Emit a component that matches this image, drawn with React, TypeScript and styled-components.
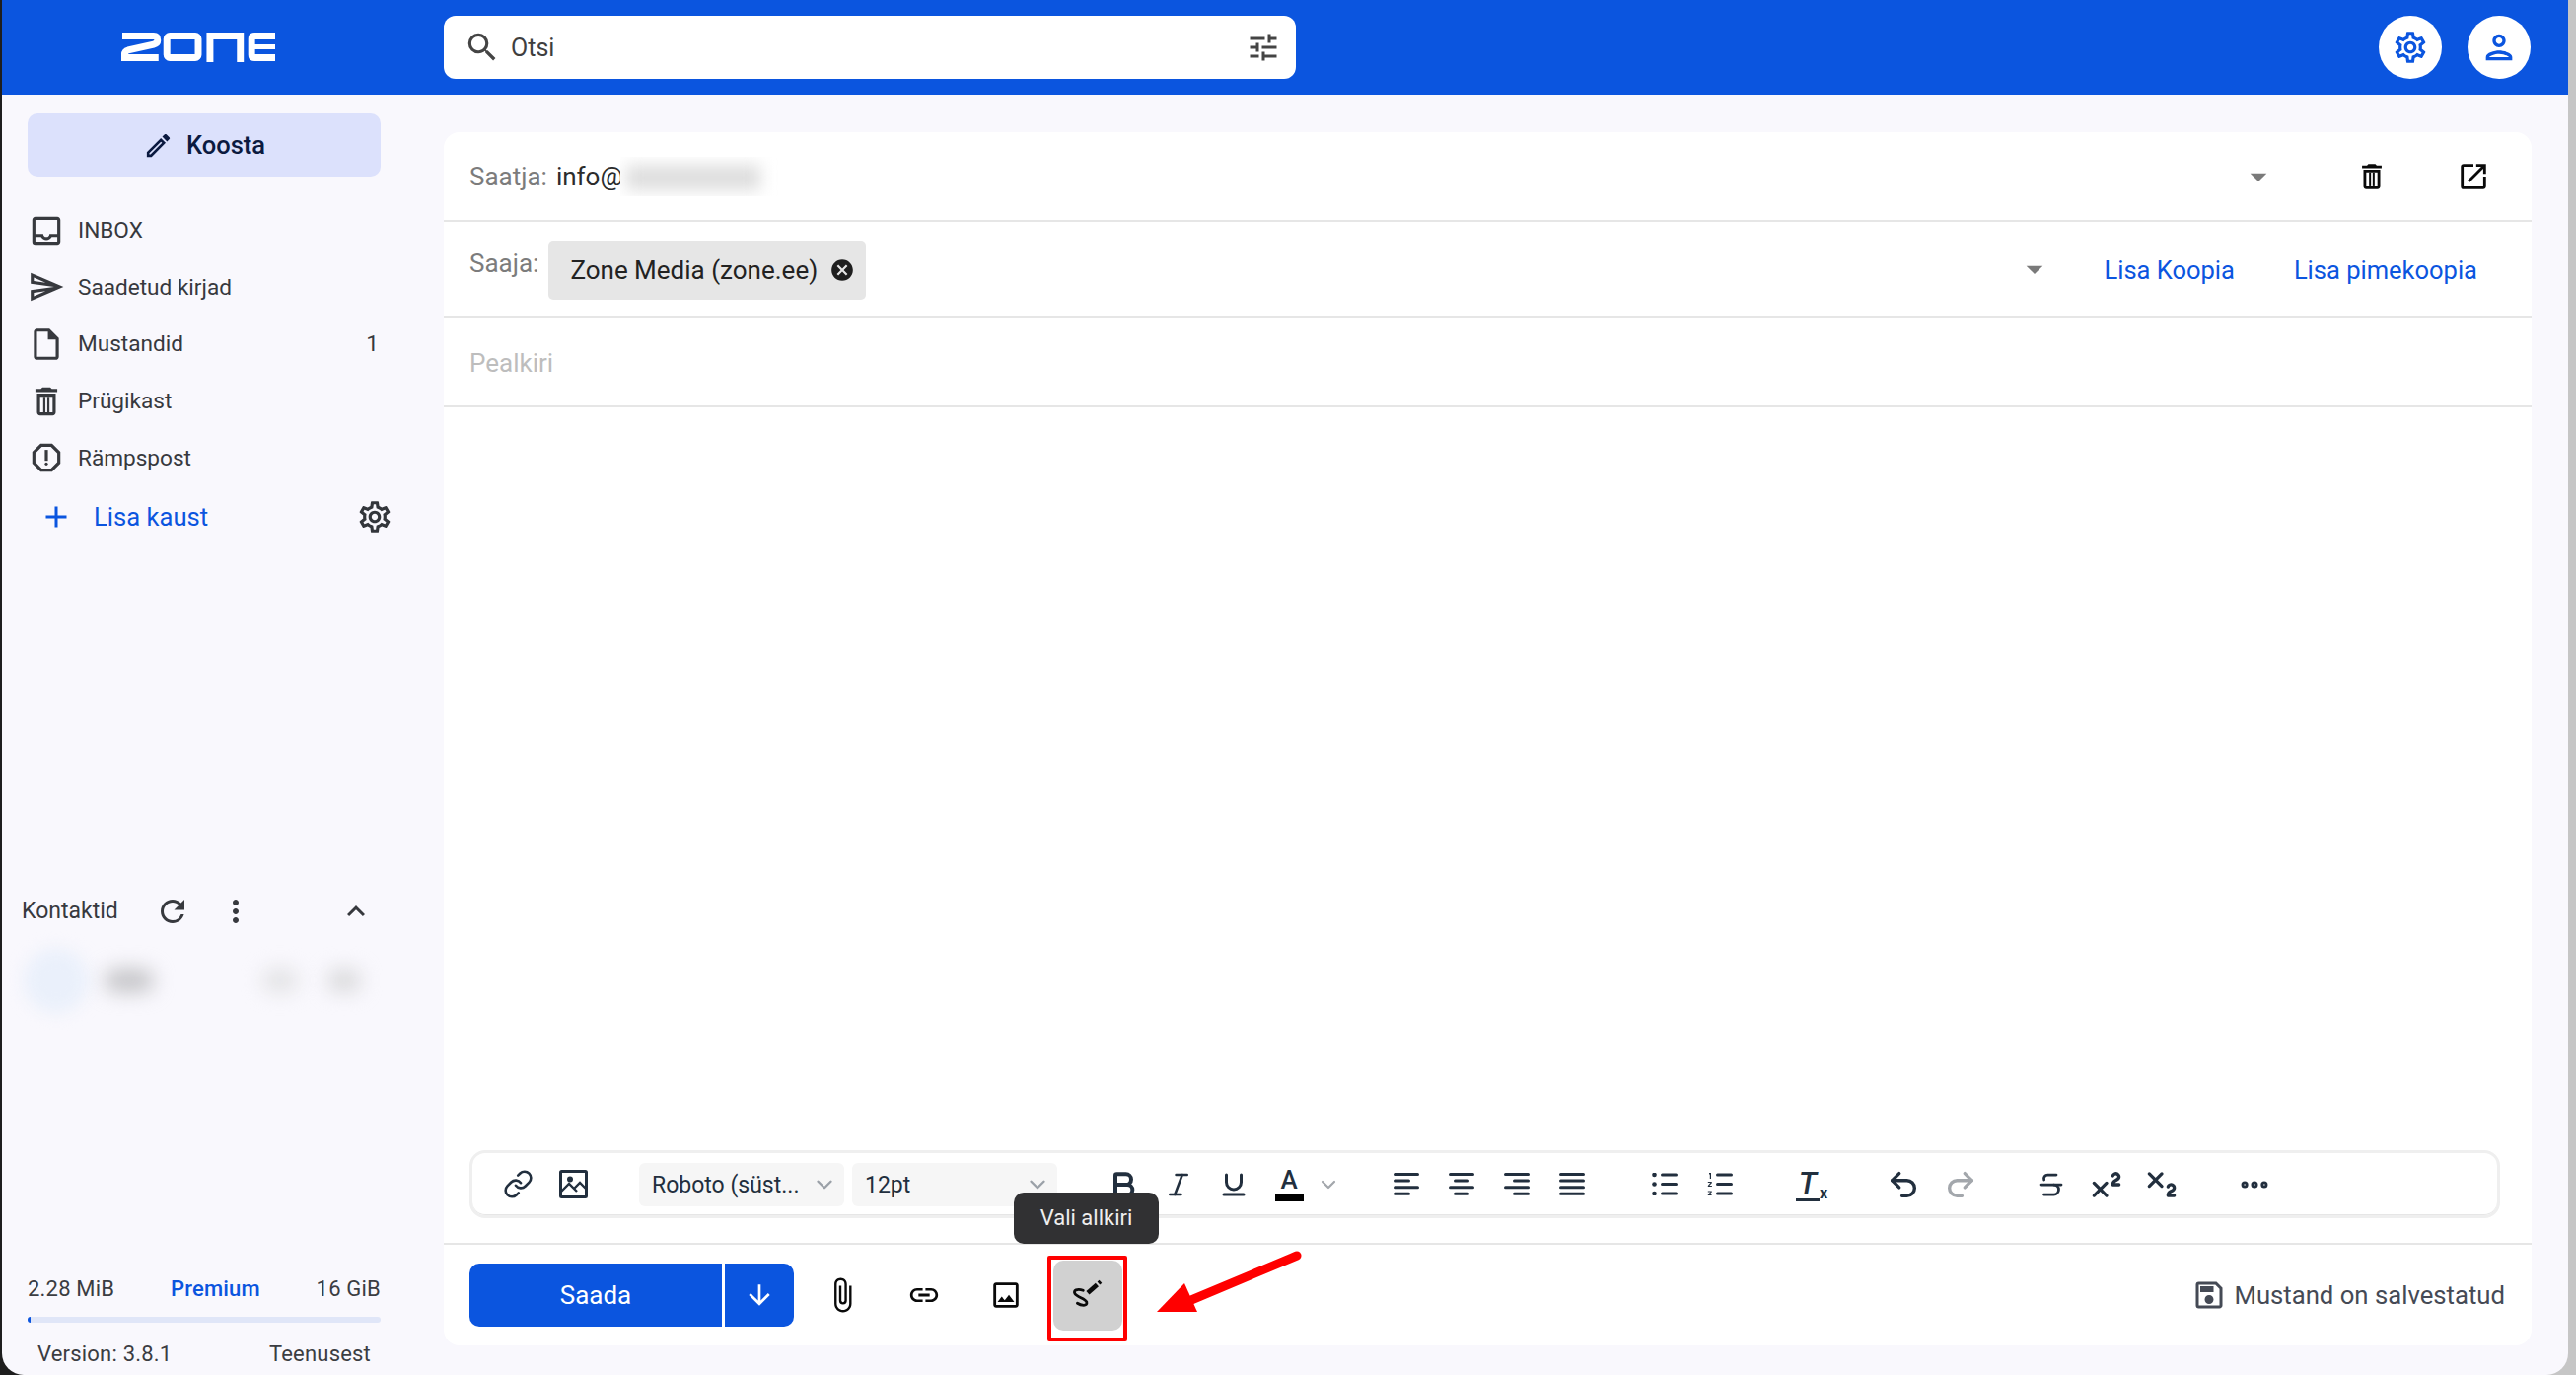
import React from "react";
import styled, { createGlobalStyle } from "styled-components";
import {
  MdSearch, MdTune, MdOutlineSettings, MdOutlinePerson, MdOutlineEdit, MdOutlineInbox, MdOutlineSend,
  MdOutlineInsertDriveFile, MdOutlineReport, MdAdd, MdRefresh, MdMoreVert,
  MdKeyboardArrowUp, MdArrowDropDown, MdOpenInNew, MdCancel, MdArrowDownward, MdAttachFile, MdLink,
  MdOutlineImage, MdOutlineSave,
} from "react-icons/md";
import { Bold, Italic, Underline, Strikethrough, Superscript, Subscript, Undo2, Redo2, Link as LinkIcon, Ellipsis, ChevronDown } from "lucide-react";

const Global = createGlobalStyle`
  html, body { margin: 0; padding: 0; height: 100%; overflow: hidden; }
  body { background: linear-gradient(to right, #1e1e1e 50%, #c6c6c6 50%); font-family: Roboto, "Noto Sans", sans-serif; }
`;

const BLUE = "#0b55df";
const INK = "#222f3e";

const Win = styled.div`
  position: relative; width: 2602px; height: 1394px; margin-left: 2px; background: #f9f8fd;
  border-radius: 0 0 22px 22px; overflow: hidden; display: grid; grid-template-rows: 96px 1fr;
`;
const Header = styled.header`
  background: ${BLUE}; display: flex; align-items: center; padding-left: 121px; padding-right: 38px;
`;
const Logo = styled.svg`width: 156px; height: 30px; flex: none;`;
const Search = styled.div`
  margin-left: 171px; width: 864px; height: 64px; background: #fff; border-radius: 12px; display: flex;
  align-items: center; padding: 0 15px 0 20px; box-sizing: border-box; color: #444; font-size: 25px;
  span { margin-left: 10px; flex: 1; color: #3f3f3f; }
`;
const RoundBtn = styled.div<{ $ml: number }>`
  width: 64px; height: 64px; border-radius: 50%; background: #fff; color: ${BLUE}; display: flex;
  align-items: center; justify-content: center; margin-left: ${p => p.$ml}px; flex: none;
`;
const Main = styled.div`display: grid; grid-template-columns: 448px minmax(0, 1fr); min-height: 0;`;
const Side = styled.aside`display: flex; flex-direction: column; min-height: 0;`;
const Compose = styled.div`
  margin: 19px 0 0 26px; width: 358px; height: 64px; border-radius: 10px; background: #dce1fc; color: #0b1a40;
  display: flex; align-items: center; justify-content: center; gap: 13px; font-size: 25.5px; font-weight: 500;
  box-sizing: border-box;
`;
const Nav = styled.nav`margin: 26px 0 0 26px; width: 358px;`;
const NavRow = styled.div`
  height: 57.6px; display: flex; align-items: center; gap: 13px; color: #37393e; font-size: 22.6px; font-weight: 400;
  svg { flex: none; }
  b { margin-left: auto; font-weight: 400; padding-right: 2px; }
`;
const AddRow = styled.div`
  height: 62px; display: flex; align-items: center; color: ${BLUE}; font-size: 25.6px;
  padding-left: 11px;
  span { margin-left: 20px; flex: 1; }
  svg:last-child { color: #33363b; margin-right: -13px; }
`;
const ContactHead = styled.div`
  margin-top: 351px; height: 36px; padding: 0 71px 0 20px; display: flex; align-items: center; color: #37393e;
  font-size: 23px; font-weight: 400;
`;
const ContactTitle = styled.span`width: 96px;`;
const HeadIcon = styled.span<{ $ml: string }>`display: flex; margin-left: ${p => p.$ml};`;
const ContactBlur = styled.div`
  margin-top: 17px; height: 70px; padding-left: 22px; display: flex; align-items: center; position: relative;
`;
const BlurAvatar = styled.div`width: 66px; height: 66px; border-radius: 50%; background: #eaf0fb; filter: blur(8px); flex: none;`;
const BlurBit = styled.div<{ $w: number; $ml: number; $c: string }>`
  width: ${p => p.$w}px; height: 24px; border-radius: 12px; background: ${p => p.$c}; filter: blur(10px);
  margin-left: ${p => p.$ml}px; flex: none;
`;
const Quota = styled.div`margin-top: auto; padding: 0 0 8px 26px; width: 358px;`;
const QuotaRow = styled.div`
  height: 28px; display: flex; justify-content: space-between; align-items: center; font-size: 22px; color: #3b3d42;
  letter-spacing: .2px;
`;
const Premium = styled.span`color: ${BLUE}; font-weight: 500;`;
const Bar = styled.div`height: 6px; margin: 15px 0 17px; background: #e0e6f8; border-radius: 3px; overflow: hidden;`;
const BarFill = styled.div`height: 100%; background: ${BLUE};`;
const VersionRow = styled(QuotaRow)`padding: 0 10px; color: #3b3d42;`;

const Content = styled.div`padding: 38px 37px 30px 0; min-height: 0; display: flex;`;
const Card = styled.section`
  flex: 1; min-width: 0; background: #fff; border-radius: 16px; display: flex; flex-direction: column;
`;
const Row = styled.div<{ $h: number }>`
  height: ${p => p.$h}px; flex: none; box-sizing: border-box; border-bottom: 2px solid #e6e6e6; display: flex;
  align-items: center; padding-left: 26px; font-size: 26px; color: #2c2c2c;
`;
const Label = styled.span`color: #7c7c7c; font-size: 26px;`;
const Mail = styled.span`margin-left: 9px;`;
const Blurred = styled.span`
  position: relative; display: block; width: 160px; height: 40px; overflow: hidden; margin-left: -3px; background: #fff;
  &::after { content: ""; position: absolute; left: 6px; right: 18px; top: 8px; bottom: 6px; background: #dedede; filter: blur(8px); }
`;
const Caret = styled.span<{ $ml: string }>`
  display: flex; width: 40px; justify-content: center; color: #7a7a7a; margin-left: ${p => p.$ml};
`;
const IconBtn = styled.span<{ $ml: number }>`
  display: flex; width: 48px; justify-content: center; color: #0a0a0a; margin-left: ${p => p.$ml}px;
`;
const RowEnd = styled.span`width: 35px; flex: none;`;
const ToRow = styled(Row)`align-items: flex-start; padding-top: 19px; padding-right: 55px;`;
const ToLabel = styled(Label)`margin-top: 8px;`;
const Chip = styled.span`
  margin-left: 10px; height: 60px; width: 322px; box-sizing: border-box; background: #e6e6e6; border-radius: 5px;
  display: flex; align-items: center; padding-left: 22px; color: #222; gap: 12px;
  svg { color: #1f1f1f; }
`;
const CaretTop = styled(Caret)`margin-top: 9px;`;
const LinkText = styled.span<{ $ml: number }>`
  color: ${BLUE}; margin-left: ${p => p.$ml}px; height: 60px; display: flex; align-items: center; font-size: 25.5px;
`;
const Subject = styled(Row)`color: #bdbdbd; padding-top: 2px; font-size: 26px;`;
const Editor = styled.div`flex: 1; display: flex; flex-direction: column; justify-content: flex-end; padding: 0 32px 25px 26px; min-height: 0;`;
const Toolbar = styled.div`
  height: 69px; box-sizing: border-box; border: 3px solid #efefef; border-radius: 16px; padding-left: 18px;
  display: flex; align-items: center; box-shadow: inset 0 -1px #e6e6e6;
`;
const Group = styled.div<{ $ml: number }>`display: flex; align-items: center; margin-left: ${p => p.$ml}px; color: ${INK};`;
const TBtn = styled.span<{ $w?: number; $muted?: boolean }>`
  width: ${p => p.$w ?? 56}px; height: 44px; display: flex; align-items: center; justify-content: center;
  color: ${p => (p.$muted ? "#a3a7ac" : "inherit")}; flex: none;
`;
const Select = styled.div<{ $ml: number }>`
  width: 208px; height: 44px; margin-left: ${p => p.$ml}px; background: #f6f6f6; border-radius: 6px; display: flex;
  align-items: center; justify-content: space-between; padding: 2px 7px 0 13px; box-sizing: border-box; color: ${INK};
  font-size: 23px; flex: none;
  svg { color: #9ba1a8; margin-top: -2px; }
`;
const ColorA = styled.span`
  width: 29px; height: 35px; border-bottom: 7px solid #000; box-sizing: border-box; text-align: center; font-size: 26px;
  font-weight: 500; line-height: 27px; color: ${INK};
`;
const ClearT = styled.span`
  position: relative; font: italic 500 31px/31px Roboto, sans-serif; width: 24px; text-align: center;
  border-bottom: 3px solid ${INK}; height: 31px; color: ${INK}; margin-right: 8px;
`;
const ClearX = styled.span`
  position: absolute; left: 24px; bottom: -4px; font: 700 16px Roboto, sans-serif; color: ${INK};
`;
const Footer = styled.div`
  height: 104px; flex: none; box-sizing: border-box; border-top: 2px solid #e6e6e6; display: flex; align-items: center;
  padding: 0 27px 0 26px; font-size: 25.7px; color: #454a55;
`;
const Send = styled.div`
  width: 329px; height: 64px; border-radius: 10px; background: ${BLUE}; display: grid; grid-template-columns: 256px 3px 1fr;
  color: #fff; flex: none; margin-right: 14px; font-size: 26px;
`;
const SendLabel = styled.span`display: flex; align-items: center; justify-content: center;`;
const SendDivider = styled.span`background: #fff;`;
const SendArrow = styled.span`display: flex; align-items: center; justify-content: center;`;
const FootBtn = styled.div<{ $active?: boolean }>`
  position: relative; width: 70px; height: 71px; margin-right: 13px; border-radius: 10px; display: flex; align-items: center;
  justify-content: center; color: #0a0a0a; background: ${p => (p.$active ? "#d1d1d1" : "transparent")}; flex: none;
`;
const RedBox = styled.span`
  position: absolute; top: -5px; left: -6px; right: -5px; bottom: -11px; border: 4px solid #f00; border-radius: 2px;
`;
const Tooltip = styled.span`
  position: absolute; left: -40px; bottom: 88px; width: 147px; height: 52px; border-radius: 10px; background: #313133;
  color: #eee; font-size: 22px; display: flex; align-items: center; justify-content: center;
`;
const Saved = styled.div`margin-left: auto; display: flex; align-items: center; gap: 7px;`;
const Arrow = styled.svg`position: absolute; left: 1163px; top: 1265px; width: 160px; height: 70px;`;

const bars = {
  left: [[0, 26], [0, 17], [0, 26], [0, 17]],
  center: [[0, 26], [5, 16], [0, 26], [5, 16]],
  right: [[0, 26], [9, 17], [0, 26], [9, 17]],
  justify: [[0, 26], [0, 26], [0, 26], [0, 26]],
};
const Align = ({ kind }: { kind: keyof typeof bars }) => (
  <svg width="26" height="23" viewBox="0 0 26 23">
    {bars[kind].map(([x, w], i) => <rect key={i} x={x} y={i * 6.6} width={w} height="3" rx="1.5" fill={INK} />)}
  </svg>
);
const BulletList = () => (
  <svg width="26" height="23" viewBox="0 0 26 23" fill={INK}>
    {[0, 1, 2].map(i => <React.Fragment key={i}><circle cx="2.5" cy={2 + i * 9.5} r="2.3" /><rect x="9" y={0.5 + i * 9.5} width="17" height="3" rx="1.5" /></React.Fragment>)}
  </svg>
);
const NumList = () => (
  <svg width="26" height="23" viewBox="0 0 26 23" fill={INK}>
    {[0, 1, 2].map(i => <rect key={i} x="9" y={0.5 + i * 9.5} width="17" height="3" rx="1.5" />)}
    <path d="M2 0h2v6H2.800V1.400H2zM.8 9h4v1.200L2.300 13h2.600v1H.8v-1l2.600-3H.8zM.8 18.500h4v1l-1.600 1.200c1.200 0 1.700.6 1.700 1.300 0 .8-.7 1-2 1H.8v-1h2c.8 0 1-.1 1-.4 0-.4-.5-.4-1.600-.4v-.7l1.400-1H.8z" />
  </svg>
);
const ImgIcon = () => (
  <svg width="29" height="29" viewBox="0 0 29 29" fill="none" stroke={INK} strokeWidth="3">
    <rect x="1.500" y="1.500" width="26" height="26" rx="1" />
    <circle cx="11" cy="9.500" r="3" fill={INK} stroke="none" />
    <path d="M2 22l8-8 8 8M15 19l6-6 7 7" strokeWidth="2.400" />
  </svg>
);
const Signature = () => (
  <svg width="40" height="40" viewBox="0 0 34 34" fill="none" stroke="#0a0a0a" strokeLinecap="round">
    <path d="M13 13C8 11 4 13 6 16c2 3 9 4 10 7 1 4-5 3-8 1" strokeWidth="2.400" />
    <path d="M17 15l8-7" strokeWidth="4" strokeLinecap="butt" />
    <path d="M26.300 6.800l1.700-1.500" strokeWidth="3.400" strokeLinecap="butt" />
  </svg>
);
const TrashIcon = ({ size }: { size: number }) => (
  <svg width={size} height={size} viewBox="0 0 24 24" fill="currentColor">
    <path d="M16 9v10H8V9h8m-1.500-6h-5l-1 1H5v2h14V4h-3.500l-1-1zM18 7H6v12c0 1.100.9 2 2 2h8c1.100 0 2-.9 2-2V7z" />
    <rect x="10" y="9" width="1.400" height="10" />
    <rect x="12.600" y="9" width="1.400" height="10" />
  </svg>
);

const icon = { size: 38 };

export default function App() {
  return (
    <>
      <Global />
      <Win>
        <Header>
          <Logo viewBox="0 0 157 30" fill="none" stroke="#fff" strokeWidth="7">
            <path d="M1 3.500h32q4 0 4 4.500 0 3-4 4L7 18q-3.500 1-3.500 4v3.500H38" />
            <rect x="46.500" y="3.500" width="32" height="22" rx="3" />
            <path d="M90.500 30V3.500h31V30" />
            <path d="M157 3.500h-21q-3 0-3 3v16q0 3 3 3h21" />
            <path d="M133 14.500h24" strokeWidth="5" />
          </Logo>
          <Search>
            <MdSearch size={38} />
            <span>Otsi</span>
            <MdTune size={36} />
          </Search>
          <RoundBtn $ml={1098}><MdOutlineSettings {...icon} /></RoundBtn>
          <RoundBtn $ml={26}><MdOutlinePerson size={40} /></RoundBtn>
        </Header>
        <Main>
          <Side>
            <Compose><MdOutlineEdit size={31} />Koosta</Compose>
            <Nav>
              <NavRow><MdOutlineInbox {...icon} />INBOX</NavRow>
              <NavRow><MdOutlineSend {...icon} />Saadetud kirjad</NavRow>
              <NavRow><MdOutlineInsertDriveFile {...icon} />Mustandid<b>1</b></NavRow>
              <NavRow><TrashIcon size={38} />Prügikast</NavRow>
              <NavRow><MdOutlineReport {...icon} />Rämpspost</NavRow>
              <AddRow><MdAdd size={36} /><span>Lisa kaust</span><MdOutlineSettings size={38} /></AddRow>
            </Nav>
            <ContactHead>
              <ContactTitle>Kontaktid</ContactTitle>
              <HeadIcon $ml="39px"><MdRefresh size={36} /></HeadIcon>
              <HeadIcon $ml="28px"><MdMoreVert size={36} /></HeadIcon>
              <HeadIcon $ml="auto"><MdKeyboardArrowUp size={36} /></HeadIcon>
            </ContactHead>
            <ContactBlur>
              <BlurAvatar />
              <BlurBit $w={50} $ml={16} $c="#c4c4c7" />
              <BlurBit $w={36} $ml={110} $c="#e2e2e4" />
              <BlurBit $w={34} $ml={30} $c="#d9d9db" />
            </ContactBlur>
            <Quota>
              <QuotaRow><span>2.28 MiB</span><Premium>Premium</Premium><span>16 GiB</span></QuotaRow>
              <Bar><BarFill style={{ width: `${(2.28 / (16 * 1024)) * 100 + 0.8}%` }} /></Bar>
              <VersionRow><span>Version: 3.8.1</span><span>Teenusest</span></VersionRow>
            </Quota>
          </Side>
          <Content>
            <Card>
              <Row $h={91}>
                <Label>Saatja:</Label>
                <Mail>info@</Mail>
                <Blurred />
                <Caret $ml="auto"><MdArrowDropDown size={40} /></Caret>
                <IconBtn $ml={71}><TrashIcon size={34} /></IconBtn>
                <IconBtn $ml={55}><MdOpenInNew size={34} /></IconBtn>
                <RowEnd />
              </Row>
              <ToRow $h={97}>
                <ToLabel>Saaja:</ToLabel>
                <Chip>Zone Media (zone.ee)<MdCancel size={26} /></Chip>
                <CaretTop $ml="auto"><MdArrowDropDown size={40} /></CaretTop>
                <LinkText $ml={50}>Lisa Koopia</LinkText>
                <LinkText $ml={60}>Lisa pimekoopia</LinkText>
              </ToRow>
              <Subject $h={91}>Pealkiri</Subject>
              <Editor>
                <Toolbar>
                  <Group $ml={0}>
                    <TBtn><LinkIcon size={31} strokeWidth={2} /></TBtn>
                    <TBtn><ImgIcon /></TBtn>
                  </Group>
                  <Select $ml={39}>Roboto (süst...<ChevronDown size={26} strokeWidth={2.2} /></Select>
                  <Select $ml={8}>12pt<ChevronDown size={26} strokeWidth={2.2} /></Select>
                  <Group $ml={39}>
                    <TBtn><Bold size={32} strokeWidth={3} /></TBtn>
                    <TBtn><Italic size={30} strokeWidth={2} /></TBtn>
                    <TBtn><Underline size={30} strokeWidth={2.4} /></TBtn>
                    <TBtn><ColorA>A</ColorA></TBtn>
                    <TBtn $w={24} $muted><ChevronDown size={26} strokeWidth={2.2} /></TBtn>
                  </Group>
                  <Group $ml={39}>
                    <TBtn><Align kind="left" /></TBtn>
                    <TBtn><Align kind="center" /></TBtn>
                    <TBtn><Align kind="right" /></TBtn>
                    <TBtn><Align kind="justify" /></TBtn>
                  </Group>
                  <Group $ml={38}>
                    <TBtn><BulletList /></TBtn>
                    <TBtn><NumList /></TBtn>
                  </Group>
                  <Group $ml={37}>
                    <TBtn><ClearT>T<ClearX>x</ClearX></ClearT></TBtn>
                  </Group>
                  <Group $ml={37}>
                    <TBtn><Undo2 size={34} strokeWidth={2.4} /></TBtn>
                    <TBtn $w={59} $muted><Redo2 size={34} strokeWidth={2.4} /></TBtn>
                  </Group>
                  <Group $ml={35}>
                    <TBtn><Strikethrough size={30} strokeWidth={2.2} /></TBtn>
                    <TBtn><Superscript size={38} strokeWidth={2.1} /></TBtn>
                    <TBtn><Subscript size={38} strokeWidth={2.1} /></TBtn>
                  </Group>
                  <Group $ml={38}>
                    <TBtn><Ellipsis size={34} strokeWidth={3} /></TBtn>
                  </Group>
                </Toolbar>
              </Editor>
              <Footer>
                <Send>
                  <SendLabel>Saada</SendLabel>
                  <SendDivider />
                  <SendArrow><MdArrowDownward size={32} /></SendArrow>
                </Send>
                <FootBtn><MdAttachFile size={38} /></FootBtn>
                <FootBtn><MdLink size={34} /></FootBtn>
                <FootBtn><MdOutlineImage size={34} /></FootBtn>
                <FootBtn $active>
                  <Signature />
                  <RedBox />
                  <Tooltip>Vali allkiri</Tooltip>
                </FootBtn>
                <Saved><MdOutlineSave size={36} />Mustand on salvestatud</Saved>
              </Footer>
            </Card>
          </Content>
        </Main>
        <Arrow viewBox="0 0 160 70">
          <path d="M43 53L150 8" stroke="#f00" strokeWidth="9" strokeLinecap="round" />
          <path d="M8 65L36 36 49 65z" fill="#f00" />
        </Arrow>
      </Win>
    </>
  );
}
